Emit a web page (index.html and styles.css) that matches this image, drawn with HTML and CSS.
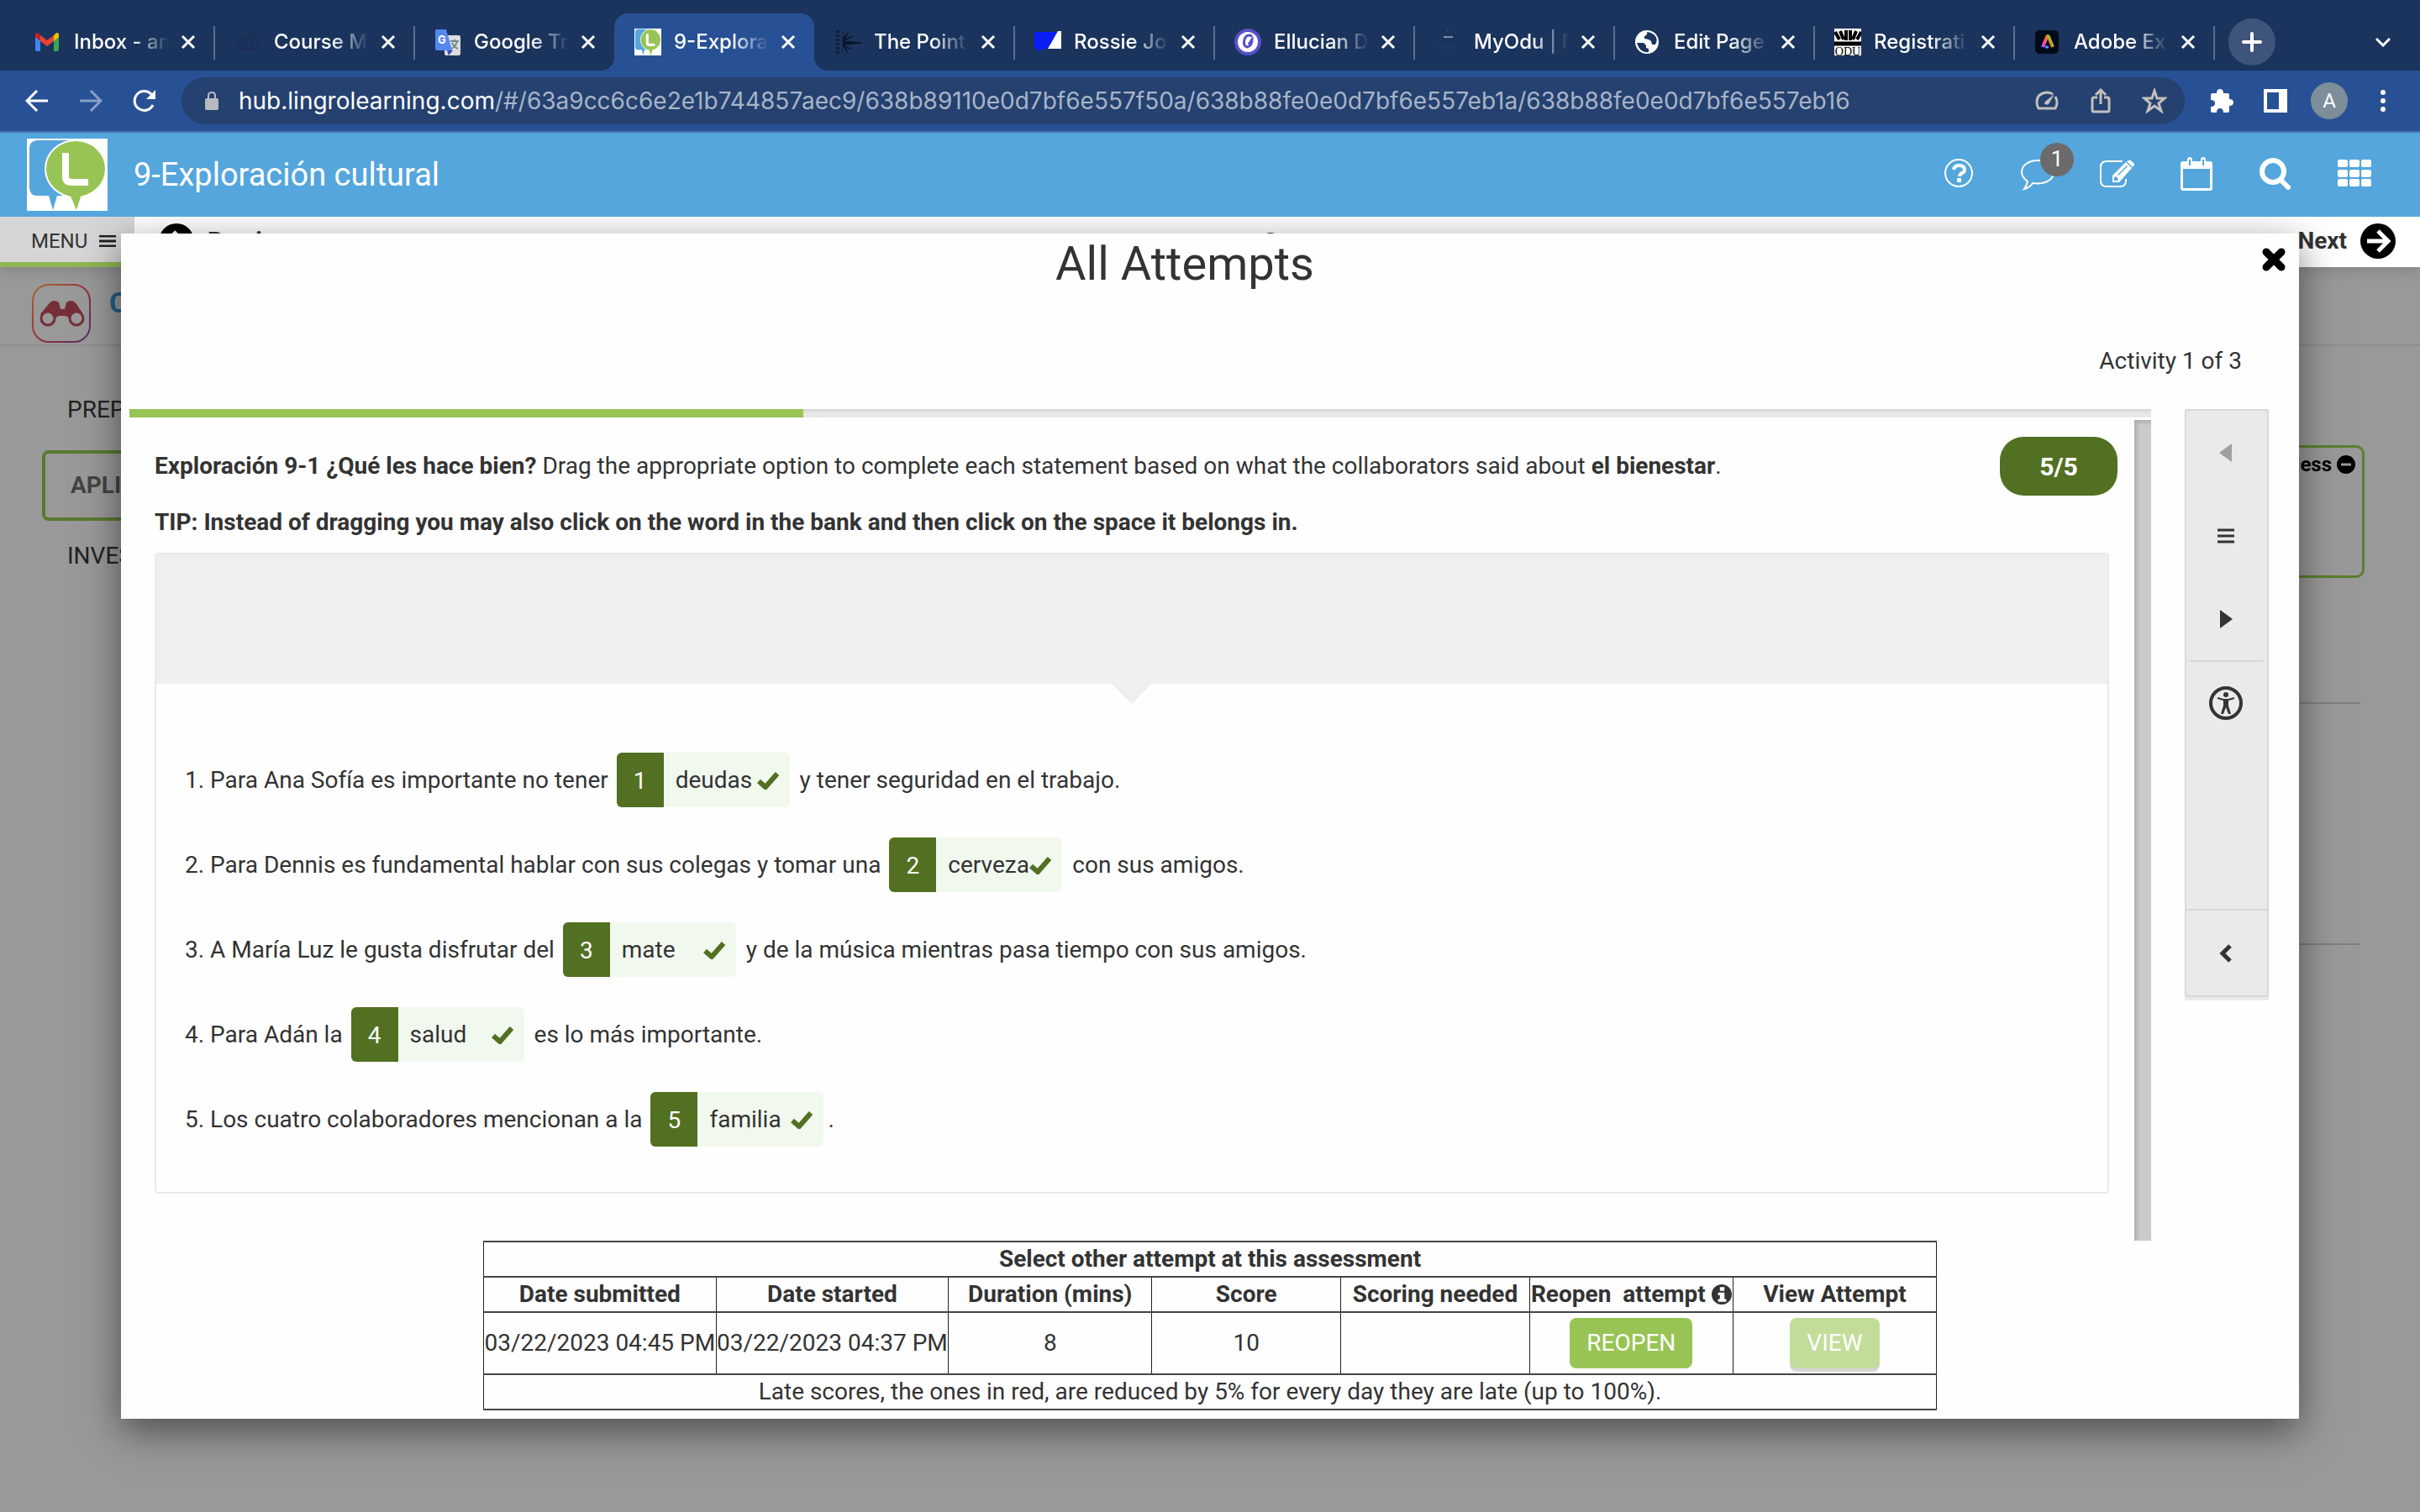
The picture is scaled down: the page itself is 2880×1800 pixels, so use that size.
FILE: index.html
```html
<!DOCTYPE html>
<html lang="en">
<head>
<meta charset="utf-8">
<title>9-Exploración cultural</title>
<link rel="stylesheet" href="styles.css">
</head>
<body>
<div class="tabstrip">
  <div class="tab">
    <svg class="favicon" viewBox="0 0 32 32"><path fill="#4285f4" d="M1 8v17q0 2 2 2h4V13z"/><path fill="#34a853" d="M29 8v17q0 2-2 2h-4V13z"/><path fill="#c5221f" d="M1 10V7q0-2 2-2 1 0 2 1l2 2v7z"/><path fill="#fbbc04" d="M29 10V7q0-2-2-2-1 0-2 1l-2 2v7z"/><path fill="#ea4335" d="M7 8l8 6 8-6v7l-8 6-8-6z"/></svg>
    <span class="tab-title">Inbox - an</span>
    <button class="tab-close" aria-label="Close"><svg viewBox="0 0 18 18"><path d="M2 2l14 14M16 2L2 16"/></svg></button>
  </div>
  <div class="tab">
    <svg class="favicon" viewBox="0 0 32 32" fill="none" stroke="#1c2c55" stroke-width="2"><path d="M6 24h20M6 20Q0 14 4 10q5-3 7 10M26 20q6-6 2-10-5-3-7 10M16 20V4M12 19q-4-10 4-12 8 2 4 12"/></svg>
    <span class="tab-title">Course M</span>
    <button class="tab-close" aria-label="Close"><svg viewBox="0 0 18 18"><path d="M2 2l14 14M16 2L2 16"/></svg></button>
  </div>
  <div class="tab no-sep">
    <svg class="favicon" viewBox="0 0 32 32"><rect x="12" y="8" width="19" height="24" rx="2" fill="#dcdcdc"/><path fill="#3c4bb5" d="M15 26h7l-5 6z"/><path fill="#5488ee" d="M3 1h11l7 25H3q-2 0-2-2V3q0-2 2-2z"/><text x="4" y="18" font-family="Inter, sans-serif" font-size="13" font-weight="700" fill="#fff">G</text><path d="M19 15h10M24 13v2M27 15q-2 7-7 9M21 17q2 5 7 7" fill="none" stroke="#6b8b93" stroke-width="2"/></svg>
    <span class="tab-title">Google Tr</span>
    <button class="tab-close" aria-label="Close"><svg viewBox="0 0 18 18"><path d="M2 2l14 14M16 2L2 16"/></svg></button>
  </div>
  <div class="tab active no-sep">
    <svg class="favicon" viewBox="0 0 96 86" preserveAspectRatio="none"><path fill="#fff" d="M0 0h96v86H0z"/><path fill="#54a6dc" d="M13 2h42v66H36l-5 17-5-17H13Q3 68 3 58V12Q3 2 13 2z"/><ellipse cx="58" cy="36" rx="37" ry="35" fill="#fff"/><ellipse cx="58" cy="36" rx="35" ry="33" fill="#98c455"/><path fill="#98c455" d="M51 66h14l-6 19z"/><path d="M46 17v28q0 7 7 7h20" fill="none" stroke="#fff" stroke-width="9"/></svg>
    <span class="tab-title">9-Explora</span>
    <button class="tab-close" aria-label="Close"><svg viewBox="0 0 18 18"><path d="M2 2l14 14M16 2L2 16"/></svg></button>
  </div>
  <div class="tab">
    <svg class="favicon" viewBox="0 0 32 32" stroke="#0c1424" fill="#0c1424"><path d="M4 2v28" stroke-width="4" stroke-dasharray="3 2" opacity=".6"/><path d="M10 4v26" stroke-width="1" opacity=".6"/><path d="M10 15l22 2-22 2 10 6-8-5 4 9-5-8V10l5-5-3 7 9-3z"/></svg>
    <span class="tab-title">The Point</span>
    <button class="tab-close" aria-label="Close"><svg viewBox="0 0 18 18"><path d="M2 2l14 14M16 2L2 16"/></svg></button>
  </div>
  <div class="tab">
    <svg class="favicon" viewBox="0 0 32 32"><path fill="#0a1ff5" d="M0 4h28L18 24H10l-6 5v-5H0z"/><path fill="#fff" d="M28 3h4v21H16z"/></svg>
    <span class="tab-title">Rossie Jo</span>
    <button class="tab-close" aria-label="Close"><svg viewBox="0 0 18 18"><path d="M2 2l14 14M16 2L2 16"/></svg></button>
  </div>
  <div class="tab">
    <svg class="favicon" viewBox="0 0 32 32"><circle cx="16" cy="16" r="16" fill="#5750c8"/><circle cx="16" cy="16" r="12" fill="#fff"/><path d="M21 9q-7-3-9 4-2 8 3 9 6-1 6-9l-4 6" fill="none" stroke="#5750c8" stroke-width="3"/></svg>
    <span class="tab-title">Ellucian D</span>
    <button class="tab-close" aria-label="Close"><svg viewBox="0 0 18 18"><path d="M2 2l14 14M16 2L2 16"/></svg></button>
  </div>
  <div class="tab">
    <svg class="favicon" viewBox="0 0 32 32"><path d="M11 10h11" stroke="#7f8ea6" stroke-width="2"/><path d="M16 1v2" stroke="#5f7090" stroke-width="1"/><path d="M2 20h28M4 26h24" stroke="#16386a" stroke-width="2"/></svg>
    <span class="tab-title">MyOdu | M</span>
    <button class="tab-close" aria-label="Close"><svg viewBox="0 0 18 18"><path d="M2 2l14 14M16 2L2 16"/></svg></button>
  </div>
  <div class="tab">
    <svg class="favicon" viewBox="0 0 32 32"><circle cx="15" cy="16" r="14" fill="#fff"/><path fill="#1a345d" d="M3 17h8l3 3v3l3 1v4q-8 1-12-6zM15 4q1 4-3 5v3l5 1 3 2 1 4h4q4-7-2-12-4-3-8-3z"/></svg>
    <span class="tab-title">Edit Page</span>
    <button class="tab-close" aria-label="Close"><svg viewBox="0 0 18 18"><path d="M2 2l14 14M16 2L2 16"/></svg></button>
  </div>
  <div class="tab">
    <svg class="favicon" viewBox="0 0 32 32"><path fill="#fff" d="M0 0h32v32H0z"/><path d="M0 18h32" stroke="#000" stroke-width="5"/><path d="M1 4l5 9M7 3l4 10M14 2v12M19 2v12M26 3l-4 10M32 4l-5 9" stroke="#000" stroke-width="4"/><text x="16" y="32" text-anchor="middle" font-family="Liberation Serif, serif" font-size="14" fill="#000">ODU</text></svg>
    <span class="tab-title">Registrati</span>
    <button class="tab-close" aria-label="Close"><svg viewBox="0 0 18 18"><path d="M2 2l14 14M16 2L2 16"/></svg></button>
  </div>
  <div class="tab">
    <svg class="favicon" viewBox="0 0 32 32"><defs><linearGradient id="adobe" x1="0" y1="1" x2="1" y2="0.4"><stop offset="0" stop-color="#a05cff"/><stop offset=".35" stop-color="#ff4fa0"/><stop offset=".6" stop-color="#ff6a2a"/><stop offset="1" stop-color="#7be33a"/></linearGradient></defs><rect x="1" y="2" width="28" height="28" rx="5" fill="#020a1a"/><path d="M10 22l5-12q1-2 2 0l5 12" fill="none" stroke="url(#adobe)" stroke-width="4" stroke-linejoin="round"/><path d="M13 22h4" stroke="#4a90ff" stroke-width="3"/></svg>
    <span class="tab-title">Adobe Ex</span>
    <button class="tab-close" aria-label="Close"><svg viewBox="0 0 18 18"><path d="M2 2l14 14M16 2L2 16"/></svg></button>
  </div>
  <button class="new-tab" aria-label="New tab"><svg viewBox="0 0 24 24"><path d="M12 2v20M2 12h20"/></svg></button>
  <button class="tab-search" aria-label="Search tabs"><svg viewBox="0 0 18 12"><path d="M1 2l8 8 8-8"/></svg></button>
</div>

<div class="toolbar">
  <button class="tool" aria-label="Back"><svg width="28" height="28" viewBox="0 0 28 28"><path d="M27 14H3M14 2L2 14l12 12" class="line"/></svg></button>
  <button class="tool dim" aria-label="Forward"><svg width="28" height="28" viewBox="0 0 28 28"><path d="M1 14h24M14 2l12 12-12 12" class="line"/></svg></button>
  <button class="tool" aria-label="Reload"><svg width="28" height="28" viewBox="0 0 28 28"><path d="M24 19A11.500 11.500 0 1 1 22 6" class="line"/><path d="M27 1v11H16z" fill="#fff"/></svg></button>
  <div class="omnibox">
    <svg class="lock" viewBox="0 0 16 22"><rect y="8" width="16" height="14" rx="2" fill="#b6babf"/><path d="M4 9V5q0-4 4-4t4 4v4" fill="none" stroke="#b6babf" stroke-width="2"/></svg>
    <span class="url"><b>hub.lingrolearning.com</b>/#/63a9cc6c6e2e1b744857aec9/638b89110e0d7bf6e557f50a/638b88fe0e0d7bf6e557eb1a/638b88fe0e0d7bf6e557eb16</span>
    <button class="tool pale" aria-label="Performance"><svg width="28" height="24" viewBox="0 0 28 24"><path d="M21 4Q17 2 14 2 2 3 2 14q0 4 2 7h20q4-7 0-14" class="line"/><path d="M23 4l-7 12q-3 2-5-1 0-2 2-3z" fill="#c3c0bb"/></svg></button>
    <button class="tool pale" aria-label="Share"><svg width="24" height="30" viewBox="0 0 24 30"><path d="M8 11H4q-2 0-2 2v13q0 2 2 2h16q2 0 2-2V13q0-2-2-2h-4M12 19V3M6 8l6-6 6 6" class="line"/></svg></button>
    <button class="tool pale" aria-label="Bookmark"><svg width="30" height="30" viewBox="0 0 30 30"><path d="M15 3l3 9h9l-7 6 3 9-8-6-8 6 3-9-7-6h9z" class="line"/></svg></button>
  </div>
  <button class="tool" aria-label="Extensions"><svg width="30" height="30" viewBox="0 0 30 30"><path fill="#fff" d="M4 6h5q0-5 4-5t4 5h5q2 0 2 2v5q5 0 5 4t-5 4v6q0 2-2 2h-5q0-5-4-5t-4 5H4q-2 0-2-2v-5q5 0 5-4t-5-4V8q0-2 2-2z"/></svg></button>
  <button class="tool" aria-label="Side panel"><svg width="28" height="28" viewBox="0 0 28 28"><path fill="#fff" fill-rule="evenodd" d="M0 0h28v28H0zM4 4v20h14V4z"/></svg></button>
  <button class="tool" aria-label="Profile"><span class="avatar">A</span></button>
  <button class="tool" aria-label="More"><svg width="8" height="28" viewBox="0 0 8 28" fill="#fff"><circle cx="4" cy="4" r="3"/><circle cx="4" cy="14" r="3"/><circle cx="4" cy="24" r="3"/></svg></button>
</div>

<div class="app">
  <header class="app-header">
    <svg class="logo" viewBox="0 0 96 86"><path fill="#fff" d="M0 0h96v86H0z"/><path fill="#54a6dc" d="M13 2h42v66H36l-5 17-5-17H13Q3 68 3 58V12Q3 2 13 2z"/><ellipse cx="58" cy="36" rx="37" ry="35" fill="#fff"/><ellipse cx="58" cy="36" rx="35" ry="33" fill="#98c455"/><path fill="#98c455" d="M51 66h14l-6 19z"/><path d="M46 17v28q0 7 7 7h20" fill="none" stroke="#fff" stroke-width="8"/></svg>
    <h1 class="app-title">9-Exploración cultural</h1>
    <button class="head-btn" aria-label="Help"><svg width="36" height="36" viewBox="0 0 36 36"><circle cx="17" cy="16" r="16" class="thin"/><path d="M11 12q1-5 6-5 7 0 7 5 0 3-3 4-3 2-3 4" fill="none" stroke="#fff" stroke-width="4"/><path d="M15 22h5v5h-5z" fill="#fff"/></svg></button>
    <button class="head-btn chat" aria-label="Messages"><svg width="42" height="40" viewBox="0 0 42 40"><path d="M20 3C9 3 1 9 1 17c0 5 3 8 7 11q-1 5-4 9 7-2 10-7c15 2 25-4 25-13 0-8-8-14-19-14z" class="thin"/></svg><span class="badge">1</span></button>
    <button class="head-btn" aria-label="Edit"><svg width="42" height="36" viewBox="0 0 42 36"><path d="M27 2H8Q1 2 1 9v16q0 7 7 7h16q7 0 7-7v-2" class="thin"/><path fill="#fff" fill-rule="evenodd" d="M15 19L31 3l7 7-15 17h-8zM17 21v4h4l1-2-3-3zM21 18l11-11 1 1-11 11z"/><path fill="#fff" d="M32 2l2-1q2-1 4 1l2 2q2 2 0 4l-1 1z"/></svg></button>
    <button class="head-btn" aria-label="Calendar"><svg width="38" height="42" viewBox="0 0 38 42"><path fill="#fff" fill-rule="evenodd" d="M3 5h5V3q0-3 3-3t3 3v2h10V3q0-3 3-3t3 3v2h5q3 0 3 3v29q0 3-3 3H3q-3 0-3-3V8q0-3 3-3zM3 14v23h32V14zM10 3v7h2V3zM26 3v7h2V3z"/></svg></button>
    <button class="head-btn" aria-label="Search"><svg width="38" height="38" viewBox="0 0 38 38" fill="none" stroke="#fff"><circle cx="16" cy="15" r="13" stroke-width="6"/><path d="M26 26l8 8" stroke-width="6" stroke-linecap="round"/></svg></button>
    <button class="head-btn" aria-label="Apps"><svg width="40" height="36" viewBox="0 0 40 36" fill="#fff"><rect width="12" height="9" rx="2"/><rect x="14" width="12" height="9" rx="2"/><rect x="28" width="12" height="9" rx="2"/><rect y="12" width="12" height="9" rx="2"/><rect x="14" y="12" width="12" height="9" rx="2"/><rect x="28" y="12" width="12" height="9" rx="2"/><rect y="23" width="12" height="9" rx="2"/><rect x="14" y="23" width="12" height="9" rx="2"/><rect x="28" y="23" width="12" height="9" rx="2"/></svg></button>
  </header>

  <nav class="subnav">
    <button class="menu-btn">MENU <svg width="20" height="14" viewBox="0 0 20 14"><path d="M0 1h20M0 7h20M0 13h20" stroke="#222" stroke-width="3"/></svg></button>
    <a class="step prev" href="#prev"><svg width="42" height="42" viewBox="0 0 42 42"><circle cx="21" cy="21" r="21"/><path d="M34 21H12M21 10L10 21l11 11" fill="none" stroke="#fff" stroke-width="5"/></svg>Previous</a>
    <svg class="status" width="28" height="28" viewBox="0 0 28 28"><circle cx="14" cy="14" r="12" fill="none" stroke="#333" stroke-width="2"/></svg>
    <a class="step next" href="#next">Next<svg width="42" height="42" viewBox="0 0 42 42"><circle cx="21" cy="21" r="21"/><path d="M8 21h22M21 9l12 12-12 12" fill="none" stroke="#fff" stroke-width="5"/></svg></a>
  </nav>

  <div class="page">
    <div class="unit-head">
      <svg class="unit-icon" viewBox="0 0 70 70"><defs><linearGradient id="ring" x1="0" y1="0" x2="1" y2="1"><stop offset="0" stop-color="#a86a32"/><stop offset=".5" stop-color="#96303c"/><stop offset="1" stop-color="#503070"/></linearGradient></defs><rect x="1" y="1" width="68" height="68" rx="19" fill="none" stroke="url(#ring)" stroke-width="2"/><path fill="#762e38" d="M10 36l10-12q5-7 12-2l2 8h5l2-8q7-5 12 2l8 12-16 9q-1-7-6-7h-6q-5 0-6 7z"/><circle cx="19" cy="41" r="8" fill="#999" stroke="#762e38" stroke-width="3"/><circle cx="53" cy="41" r="8" fill="#999" stroke="#762e38" stroke-width="3"/></svg>
      <h2 class="unit-name">C</h2>
    </div>
    <div class="page-body">
      <nav class="phases">
        <a href="#prep">PREP</a>
        <a href="#apli" class="current">APLI</a>
        <a href="#inves">INVES</a>
      </nav>
      <div class="content">
        <div class="card"><button class="less">less<svg width="22" height="22" viewBox="0 0 22 22"><circle cx="11" cy="11" r="11"/><path d="M5 11h12" stroke="#999" stroke-width="3"/></svg></button></div>
        <hr class="rule"><hr class="rule">
      </div>
    </div>
  </div>

  <section class="modal" role="dialog" aria-label="All Attempts">
    <div class="modal-head">
      <h2 class="modal-title">All Attempts</h2>
      <button class="close" aria-label="Close"><svg width="28" height="28" viewBox="0 0 28 28"><path d="M5 5l18 18M23 5L5 23" stroke="#000" stroke-width="9" stroke-linecap="round"/></svg></button>
    </div>
    <p class="counter">Activity 1 of 3</p>
    <div class="player">
      <div class="stage">
        <div class="progress"><div class="progress-done"></div></div>
        <div class="viewport">
          <div class="activity">
            <div class="intro">
              <div class="intro-text">
                <p><b>Exploración 9-1 ¿Qué les hace bien?</b> Drag the appropriate option to complete each statement based on what the collaborators said about <b>el bienestar</b>.</p>
                <p><b>TIP: Instead of dragging you may also click on the word in the bank and then click on the space it belongs in.</b></p>
              </div>
              <span class="score">5/5</span>
            </div>
            <div class="exercise">
              <div class="bank"></div>
              <div class="statements">
                <div class="row">1. Para Ana Sofía es importante no tener <span class="chip"><span class="num">1</span><span class="word">deudas</span><svg class="tick" viewBox="0 0 26 22"><path d="M2 12l8 7L24 3"/></svg></span> y tener seguridad en el trabajo.</div>
                <div class="row">2. Para Dennis es fundamental hablar con sus colegas y tomar una <span class="chip"><span class="num">2</span><span class="word">cerveza</span><svg class="tick" viewBox="0 0 26 22"><path d="M2 12l8 7L24 3"/></svg></span> con sus amigos.</div>
                <div class="row">3. A María Luz le gusta disfrutar del <span class="chip"><span class="num">3</span><span class="word">mate</span><svg class="tick" viewBox="0 0 26 22"><path d="M2 12l8 7L24 3"/></svg></span> y de la música mientras pasa tiempo con sus amigos.</div>
                <div class="row">4. Para Adán la <span class="chip"><span class="num">4</span><span class="word">salud</span><svg class="tick" viewBox="0 0 26 22"><path d="M2 12l8 7L24 3"/></svg></span> es lo más importante.</div>
                <div class="row">5. Los cuatro colaboradores mencionan a la <span class="chip"><span class="num">5</span><span class="word">familia</span><svg class="tick" viewBox="0 0 26 22"><path d="M2 12l8 7L24 3"/></svg></span><span>.</span></div>
              </div>
            </div>
          </div>
          <div class="scrollbar"></div>
        </div>
      </div>
      <aside class="rail">
        <div class="rail-inner">
          <button class="rail-btn" aria-label="Previous activity" disabled><svg width="16" height="24" viewBox="0 0 16 24"><path d="M15 1v22L0 12z" fill="#a0a0a0"/></svg></button>
          <button class="rail-btn" aria-label="Activity list"><svg width="20" height="18" viewBox="0 0 20 18"><path d="M0 2h20M0 9h20M0 16h20" stroke="#333" stroke-width="3"/></svg></button>
          <button class="rail-btn" aria-label="Next activity"><svg width="16" height="24" viewBox="0 0 16 24"><path d="M1 1v22l15-11z" fill="#333"/></svg></button>
          <button class="rail-btn access" aria-label="Accessibility"><svg width="40" height="40" viewBox="0 0 40 40"><circle cx="20" cy="20" r="18" fill="none" stroke="#333" stroke-width="4"/><circle cx="20" cy="10" r="3" fill="#333"/><path d="M10 14l7 2h6l7-2" fill="none" stroke="#333" stroke-width="2"/><path d="M17 15h6v8l3 10h-3l-3-8-3 8h-3l3-10z" fill="#333"/></svg></button>
          <button class="rail-btn collapse" aria-label="Collapse"><svg width="16" height="24" viewBox="0 0 16 24"><path d="M13 3L4 12l9 9" fill="none" stroke="#333" stroke-width="5"/></svg></button>
        </div>
      </aside>
    </div>
    <table class="attempts">
      <colgroup><col class="date"><col class="date"><col class="mid"><col class="low"><col class="low"><col class="mid"><col class="mid"></colgroup>
      <thead>
        <tr><th colspan="7">Select other attempt at this assessment</th></tr>
        <tr><th>Date submitted</th><th>Date started</th><th>Duration (mins)</th><th>Score</th><th>Scoring needed</th><th>Reopen&nbsp; attempt <svg class="info" width="24" height="24" viewBox="0 0 22 22"><circle cx="11" cy="11" r="11" fill="#333"/><path d="M9 3h5v4H9zM7 9h7v7h2v3H7v-3h2v-4H7z" fill="#fff"/></svg></th><th>View Attempt</th></tr>
      </thead>
      <tbody>
        <tr class="attempt"><td>03/22/2023 04:45 PM</td><td>03/22/2023 04:37 PM</td><td>8</td><td>10</td><td></td><td><button class="btn">REOPEN</button></td><td><button class="btn view" disabled>VIEW</button></td></tr>
      </tbody>
      <tfoot><tr><td colspan="7">Late scores, the ones in red, are reduced by 5% for every day they are late (up to 100%).</td></tr></tfoot>
    </table>
  </section>
</div>
</body>
</html>
```
FILE: styles.css
```css
* { box-sizing: border-box; }
body { margin: 0; min-height: 100vh; display: flex; flex-direction: column; background: #999; color: #333; font: 28px/40px Roboto, "Liberation Sans", sans-serif; overflow-x: hidden; }
button { border: 0; margin: 0; padding: 0; background: none; color: inherit; font: inherit; display: flex; align-items: center; justify-content: center; }
a { color: inherit; text-decoration: none; }
p, h1, h2 { margin: 0; }
svg { flex: none; }

/* Browser tabs */
.tabstrip { display: flex; height: 84px; padding: 16px 35px 0 17px; background: #1a345d; color: #fff; font: 500 24px/32px Inter, sans-serif; align-items: stretch; }
.tab { position: relative; flex: 0 1 238px; min-width: 0; display: flex; align-items: center; padding: 0 22px 0 24px; }
.tab::after { content: ""; position: absolute; right: -1px; top: 15px; height: 40px; width: 2px; background: #5d6f8d; }
.tab.no-sep::after { display: none; }
.favicon { width: 32px; height: 32px; margin-right: 15px; }
.tab-title { flex: 1; min-width: 0; margin-right: 14px; overflow: hidden; white-space: nowrap; -webkit-mask-image: linear-gradient(90deg, #000 60%, transparent); mask-image: linear-gradient(90deg, #000 60%, transparent); }
.tab-close svg { width: 18px; height: 18px; }
.tab-close path, .new-tab path, .tab-search path { fill: none; stroke: #fff; stroke-width: 3; }
.tab.active { background: #285195; border-radius: 16px 16px 0 0; }
.tab.active::before { content: ""; position: absolute; left: -16px; right: -16px; bottom: 0; height: 16px; background: radial-gradient(circle at 0 0, transparent 16px, #285195 16px) left / 16px 16px no-repeat, radial-gradient(circle at 100% 0, transparent 16px, #285195 16px) right / 16px 16px no-repeat; }
.new-tab { width: 56px; height: 56px; margin: 6px 0 0 17px; border-radius: 50%; background: #3f547a; }
.new-tab svg { width: 24px; height: 24px; }
.new-tab path { stroke-width: 4; stroke-linecap: round; }
.tab-search { margin-left: auto; }
.tab-search svg { width: 18px; height: 12px; }

/* Browser toolbar */
.toolbar { display: flex; height: 74px; padding: 8px 12px; border-bottom: 2px solid #4a72b4; background: #285195; }
.tool { width: 64px; height: 56px; flex: none; }
.line { fill: none; stroke: #fff; stroke-width: 3; }
.dim { opacity: .45; }
.pale .line { stroke: #c3c0bb; }
.omnibox { flex: 1; min-width: 0; display: flex; align-items: center; margin: 0 12px; padding: 0 4px 0 28px; border-radius: 28px; background: #244170; color: #a9b4c7; font: 28px/40px Inter, sans-serif; }
.lock { width: 16px; height: 22px; margin-right: 24px; }
.url { flex: 1; min-width: 0; overflow: hidden; white-space: nowrap; }
.url b { color: #fff; font-weight: 400; }
.avatar { width: 44px; height: 44px; border-radius: 50%; background: #7c8e99; color: #fff; font: 24px/44px Roboto, sans-serif; text-align: center; }

/* Site header */
.app { position: relative; flex: 1; display: flex; flex-direction: column; }
.app-header { position: relative; z-index: 3; display: flex; align-items: center; height: 100px; padding: 0 31px 0 32px; background: #54a6dc; color: #fff; }
.logo { width: 96px; height: 86px; margin-right: 31px; }
.app-title { flex: 1; font-size: 38px; font-weight: 400; }
.head-btn { position: relative; width: 94px; height: 60px; }
.thin { fill: none; stroke: #fff; stroke-width: 2; overflow: visible; }
.head-btn svg { overflow: visible; }
.badge { position: absolute; left: 49px; top: -8px; width: 40px; height: 40px; border-radius: 50%; background: #6b6b6b; font: 26px/38px Roboto, sans-serif; text-align: center; }

.subnav { position: relative; z-index: 1; display: flex; align-items: center; height: 60px; background: #fff; font-weight: 700; box-shadow: 0 4px 16px rgba(0, 0, 0, .15); }
.menu-btn { align-self: stretch; width: 160px; gap: 14px; padding: 4px 0 0 37px; justify-content: flex-start; border-bottom: 6px solid #8fb751; background: #d6d6d6; font-size: 24px; font-weight: 400; }
.step { display: flex; flex: 1; align-items: center; padding: 0 29px 2px; }
.step svg { margin: 0 16px 0 0; }
.status { margin: 4px 16px 0 0; }
.next { justify-content: flex-end; }
.next svg { margin: 0 0 0 16px; }

/* Dimmed page */
.unit-head { display: flex; align-items: flex-start; gap: 22px; height: 94px; padding: 20px 38px 0; border-bottom: 2px solid #8d8d8d; }
.unit-icon { width: 70px; height: 70px; }
.unit-name { color: #1f5f85; font-size: 34px; line-height: 44px; }
.page-body { display: grid; grid-template-columns: 1fr 9fr; }
.phases { display: flex; flex-direction: column; padding: 56px 0 0 50px; color: #222; }
.phases a { padding-left: 30px; }
.phases .current { margin: 28px 0 22px; padding: 18px 0 18px 30px; height: 84px; border: 4px solid #5a7a30; border-right: 0; border-radius: 8px 0 0 8px; color: #444; font-weight: 700; }
.content { padding: 118px 66px 0 0; }
.card { height: 158px; display: flex; justify-content: flex-end; align-items: flex-start; padding: 0 8px; border: 3px solid #5a7f2e; border-radius: 10px; }
.less { gap: 6px; color: #000; font-size: 24px; font-weight: 700; }
.rule { height: 2px; margin: 148px 5px 0 0; border: 0; background: #7f7f7f; }
.rule + .rule { margin-top: 285px; }

/* Attempts dialog */
.modal { position: absolute; z-index: 2; top: 120px; left: 5%; right: 5%; padding-bottom: 10px; background: #fefefe; box-shadow: 0 14px 44px rgba(0, 0, 0, .5); }
.modal-head { display: flex; }
.modal-title { flex: 1; padding-left: 16px; font-size: 56px; font-weight: 400; line-height: 72px; text-align: center; }
.close { width: 28px; height: 28px; margin: 17px 16px 0 32px; }
.counter { padding: 60px 68px 37px 0; text-align: right; }
.player { display: flex; align-items: flex-start; gap: 40px; padding: 0 36px 0 10px; }
.stage { flex: 1; min-width: 0; }
.progress { height: 10px; background: linear-gradient(#d4d4d4, #e8e8e8 5px); }
.progress-done { width: 33.333%; height: 10px; background: #98c455; }
.viewport { display: flex; }
.activity { flex: 1; min-width: 0; padding: 23px 30px 56px; }
.scrollbar { width: 20px; margin-top: 3px; background: #cbcbcb; box-shadow: inset 3px 3px 4px rgba(0, 0, 0, .15); }
.intro { display: flex; align-items: flex-start; justify-content: space-between; padding-bottom: 16px; }
.intro-text { display: grid; gap: 27px; padding-top: 15px; }
.score { width: 140px; height: 70px; margin-right: -10px; border-radius: 28px; background: #527021; color: #fff; font-size: 30px; font-weight: 700; line-height: 72px; text-align: center; }
.exercise { border: 2px solid #eaeaea; border-radius: 4px; }
.bank { position: relative; height: 154px; background: #efefef; }
.bank::after { content: ""; position: absolute; top: 100%; left: 50%; margin-left: -24px; border: 24px solid transparent; border-top-color: #efefef; border-bottom: 0; }
.statements { padding: 64px 34px 36px; }
.row { display: flex; align-items: center; height: 101px; white-space: pre; }
.chip { display: flex; align-items: center; width: 206px; height: 65px; margin: 0 5px 0 3px; border-radius: 6px; background: #f1f8ee; overflow: hidden; }
.num { width: 56px; padding-top: 2px; background: #527021; color: #fff; line-height: 66px; text-align: center; }
.word { width: 98px; padding-left: 14px; margin-right: auto; }
.tick { width: 26px; height: 22px; margin-right: 13px; }
.tick path { fill: none; stroke: #527021; stroke-width: 6; }

.rail { width: 100px; padding-bottom: 4px; background: #eaeaea; }
.rail-inner { display: flex; flex-direction: column; height: 700px; border: 2px solid #d8d8d8; border-radius: 4px; }
.rail-btn { height: 99px; padding-right: 2px; }
.access { margin: 0 4px; border-top: 2px solid #d8d8d8; }
.collapse { margin-top: auto; height: 103px; border-top: 2px solid #d8d8d8; }

.attempts { width: 1730px; max-width: 100%; margin: 0 auto; table-layout: fixed; border-collapse: collapse; white-space: nowrap; text-align: center; }
.date { width: 16%; }
.mid { width: 14%; }
.low { width: 13%; }
.attempts th, .attempts td { height: 42px; padding: 0; border: 1px solid #222; border-width: 2px 1px; border-color: #444 #222; }
.attempts .attempt td { height: 74px; }
.attempts .btn { height: 60px; margin: 0 auto; padding: 0 20px; border-radius: 8px; background: #98c455; color: #fff; }
.attempts .view { background: #c2dd9a; box-shadow: 0 4px 0 #d5d5d5; }
.info { vertical-align: -3px; }
```
